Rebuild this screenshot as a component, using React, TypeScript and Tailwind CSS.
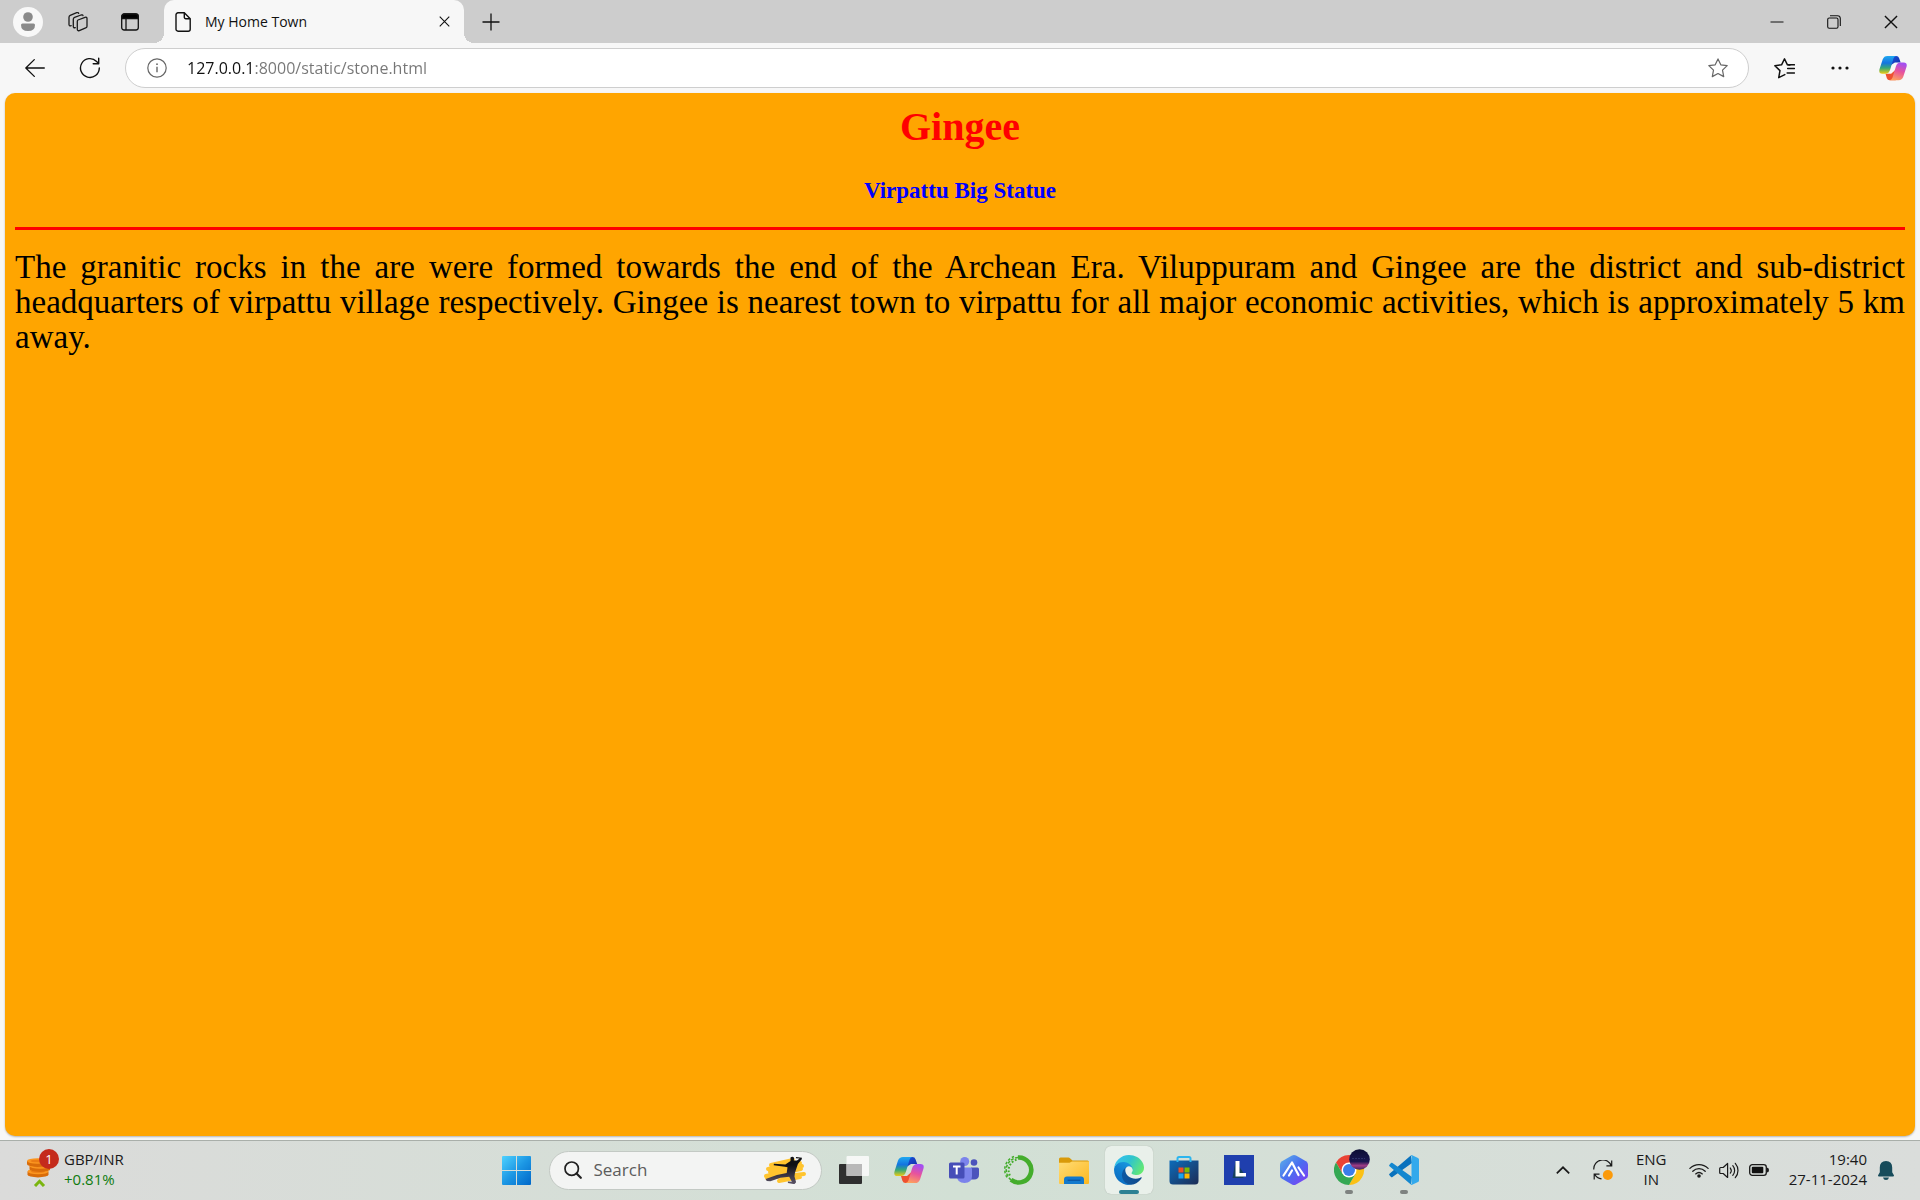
import React from "react";

type IconProps = { className?: string };

const Workspaces = ({ className }: IconProps) => (
  <svg viewBox="0 0 24 24" className={className} fill="none" stroke="#1b1b1b" strokeWidth="1.3" strokeLinejoin="round" strokeLinecap="round" aria-hidden="true">
    <path d="M12 10 19 7.300q2-.5 2 1.300v7.600q0 1.300-1.300 1.700l-6.400 2.700q-2 .6-2-1.300v-7.800q0-1.200.7-1.500Z" />
    <path d="M9.300 17.600q-2 .6-2-1.200V9.300q0-1.400 1.300-1.900L15 5q1.800-.5 2 .7" />
    <path d="M5.200 15.700q-2.200.7-2.200-1.200V7.300q0-1.400 1.200-1.900l6.500-2.700q1.700-.5 2 .7" />
  </svg>
);

const TabActions = ({ className }: IconProps) => (
  <svg viewBox="0 0 20 20" className={className} fill="none" stroke="#111" strokeWidth="1.3" aria-hidden="true">
    <rect x="1.7" y="2" width="16.600" height="16" rx="2.500" />
    <path d="M2 4.500Q2 2 4.500 2h11Q18 2 18 4.500V6.500H2Z" fill="#000" />
    <path d="M6 6.500V18" />
  </svg>
);

const PageIcon = ({ className }: IconProps) => (
  <svg viewBox="0 0 16 20" className={className} fill="none" stroke="#111" strokeWidth="1.4" strokeLinejoin="round" aria-hidden="true">
    <path d="M3 .8h6.300L15.200 6.700V17.200a2 2 0 0 1-2 2H3a2 2 0 0 1-2-2V2.800a2 2 0 0 1 2-2Z" />
    <path d="M9.300.8v4.400a1.500 1.500 0 0 0 1.500 1.500h4.400" />
  </svg>
);

const Cross = ({ className }: IconProps) => (
  <svg viewBox="0 0 12 12" className={className} fill="none" stroke="#111" strokeWidth="1.200" aria-hidden="true">
    <path d="m.8.8 10.400 10.400M11.200.8.8 11.200" />
  </svg>
);

const Plus = ({ className }: IconProps) => (
  <svg viewBox="0 0 18 18" className={className} fill="none" stroke="#111" strokeWidth="1.3" aria-hidden="true">
    <path d="M9 .5v17M.5 9h17" />
  </svg>
);

const BackArrow = ({ className }: IconProps) => (
  <svg viewBox="0 0 20 20" className={className} fill="none" stroke="#111" strokeWidth="1.300" strokeLinecap="round" strokeLinejoin="round" aria-hidden="true">
    <path d="M19.300 10H.8M9.300 1.600.8 10l8.500 8.400" />
  </svg>
);

const Reload = ({ className }: IconProps) => (
  <svg viewBox="0 0 22 22" className={className} fill="none" stroke="#111" strokeWidth="1.400" strokeLinecap="round" strokeLinejoin="round" aria-hidden="true">
    <path d="M20.300 11A9.400 9.400 0 1 1 17.600 4.400L19.600 6.500M19.700 1.200v5.500h-5.500" />
  </svg>
);

const Info = ({ className }: IconProps) => (
  <svg viewBox="0 0 20 20" className={className} fill="none" stroke="#666" strokeWidth="1.200" aria-hidden="true">
    <circle cx="10" cy="10" r="9.200" />
    <path d="M10 8.800v5.500" strokeWidth="1.400" />
    <circle cx="10" cy="6.200" r=".9" fill="#666" stroke="none" />
  </svg>
);

const Star = ({ className }: IconProps) => (
  <svg viewBox="0 0 20 20" className={className} fill="none" stroke="#666" strokeWidth="1.200" strokeLinejoin="round" aria-hidden="true">
    <path d="m10 .9 2.800 5.900 6.400.8-4.700 4.500 1.200 6.500L10 15.500l-5.700 3.100 1.200-6.500L.8 7.600l6.400-.8Z" />
  </svg>
);

const Favorites = ({ className }: IconProps) => (
  <svg viewBox="0 0 20 20" className={className} fill="none" stroke="#111" strokeWidth="1.400" strokeLinejoin="round" strokeLinecap="round" aria-hidden="true">
    <path d="m10.300 15.800-5.800 2.900 1.200-6.700L.8 7.300l6.400-.8L10 .8l2.800 5.700 2.200.3" />
    <path d="M13 10h6.500M12.500 14.300h7M13.500 6.500h6" />
  </svg>
);

const Dots = ({ className }: IconProps) => (
  <svg viewBox="0 0 18 4" className={className} fill="#111" aria-hidden="true">
    <circle cx="2" cy="2" r="1.600" />
    <circle cx="9" cy="2" r="1.600" />
    <circle cx="16" cy="2" r="1.600" />
  </svg>
);

const Copilot = ({ className, id }: IconProps & { id: string }) => (
  <svg viewBox="0 0 30 28" className={className} aria-hidden="true">
    <defs>
      <linearGradient id={id + "a"} x1="0" y1="0" x2="0" y2="1">
        <stop offset="0" stopColor="#20a9f0" />
        <stop offset=".4" stopColor="#1474e0" />
        <stop offset=".68" stopColor="#36a878" />
        <stop offset="1" stopColor="#eccb14" />
      </linearGradient>
      <linearGradient id={id + "b"} x1=".5" y1="0" x2=".2" y2="1">
        <stop offset="0" stopColor="#a44ff0" />
        <stop offset=".45" stopColor="#e8539c" />
        <stop offset="1" stopColor="#ffa65a" />
      </linearGradient>
      <linearGradient id={id + "c"} x1="0" y1="0" x2="1" y2="1">
        <stop offset="0" stopColor="#1c52dc" />
        <stop offset="1" stopColor="#1230a8" />
      </linearGradient>
    </defs>
    <path d="M12 1h6.500q2.300 0 3 2.200L23.200 8H17l-4.500 3Z" fill={`url(#${id}c)`} />
    <path d="M18 27h-6.600q-2.200 0-3-2.200L7 20h6l4.500-4Z" fill="#ee5130" />
    <path d="M9 1h9.500q-2.200.3-3 2.800L12 15.500Q10.700 20 7 20H3.500Q-.6 20 .5 15.400L4 4.600Q5.300 1 9 1Z" fill={`url(#${id}a)`} />
    <path d="M21 27h-9.600q2.400-.3 3.100-2.800L18 12.500Q19.300 8 23 8h3.500q4.100 0 3 4.600L26 23.400Q24.700 27 21 27Z" fill={`url(#${id}b)`} />
  </svg>
);

const Windows = ({ className }: IconProps) => (
  <svg viewBox="0 0 29 29" className={className} aria-hidden="true">
    <defs>
      <linearGradient id="win" x1="0" y1="0" x2="1" y2="1">
        <stop offset="0" stopColor="#4fd2ff" />
        <stop offset=".5" stopColor="#1c97e4" />
        <stop offset="1" stopColor="#0067c8" />
      </linearGradient>
    </defs>
    <path fill="url(#win)" d="M1 0h13v14H0V1q0-1 1-1Zm14 0h13q1 0 1 1v13H15ZM0 15h14v14H1q-1 0-1-1Zm15 0h14v13q0 1-1 1H15Z" />
  </svg>
);

const Magnifier = ({ className }: IconProps) => (
  <svg viewBox="0 0 18 18" className={className} fill="none" stroke="#202020" strokeLinecap="round" aria-hidden="true">
    <circle cx="7.700" cy="7.700" r="6.700" strokeWidth="1.700" />
    <path d="m12.500 12.500 4.300 4.300" strokeWidth="2.200" />
  </svg>
);

const Kick = ({ className }: IconProps) => (
  <svg viewBox="0 0 44 28" className={className} aria-hidden="true">
    <defs>
      <linearGradient id="kick" x1="0" y1="0" x2="0" y2="1">
        <stop offset=".3" stopColor="#101014" />
        <stop offset="1" stopColor="#5c5468" />
      </linearGradient>
    </defs>
    <g stroke="#ffc42e" strokeWidth="4" strokeLinecap="round" fill="none">
      <path d="M8 9 30 4M5 13 37 7M7 16 39 10M3 20 38 13M4 22 41 18M16 25 37 21" />
    </g>
    <path fill="url(#kick)" d="M27.500 1.500q2.200-1.800 3.700.6l-.4 2.300 3.200.2 2.600-2.100-3.800-.3.300-1.200 5.900.8-.4 1.800-3.700 4.500-3 8.800-.4 3.600 1.600 5.700-1.700 2-6.500-1.200 0-1.500 4 .2-2.700-5-8.800 1.100-10 3.500-3.700-.4-1-2 11.200-3.800L23.700 17l.8-5.700-2.800-.5-11-1.600.2-1.400 11.400.6 5.200-3.400Z" />
  </svg>
);

const TaskView = ({ className }: IconProps) => (
  <svg viewBox="0 0 30 28" className={className} aria-hidden="true">
    <rect x="0" y="8" width="23" height="20" rx="1" fill="#2f2f2f" />
    <rect x="7.500" y="0" width="22.500" height="20" rx="1" fill="#fafafa" fillOpacity=".88" />
    <path d="M7.500 8H23v12H7.500Z" fill="#b9b9b9" />
  </svg>
);

const Teams = ({ className }: IconProps) => (
  <svg viewBox="0 0 30 27" className={className} aria-hidden="true">
    <circle cx="25" cy="5.500" r="3.300" fill="#4b53bc" />
    <path d="M22 10.500h6.500q1.500 0 1.500 1.500v5.500q0 5-5 5h-3Z" fill="#4b53bc" />
    <circle cx="15.700" cy="4.500" r="4.500" fill="#7b83eb" />
    <path d="M9 10.500h12.500q1.500 0 1.500 1.500v7q0 7-7.500 7T8 19Z" fill="#7b83eb" />
    <rect y="5.500" width="15.500" height="16" rx="1.500" fill="#464eb8" />
    <path d="M4 9.500h7.500M7.700 9.500v8" stroke="#fff" strokeWidth="2" />
  </svg>
);

const Anaconda = ({ className }: IconProps) => (
  <svg viewBox="0 0 30 30" className={className} fill="none" stroke="#44ad2c" aria-hidden="true">
    <path d="M14 2.500A12.500 12.500 0 1 1 7 24.800" strokeWidth="4.600" />
    <path d="M14 2.500A12.500 12.500 0 0 0 7 24.800" strokeWidth="1.500" strokeDasharray="3 1.500" />
    <path d="M12.500 4.800A11 11 0 0 0 6.500 21.500" strokeWidth="2" strokeDasharray="1.800 1.700" />
    <path d="M10 1.500A14 14 0 0 0 3.500 23" strokeWidth="1.500" strokeDasharray="2.500 2" />
  </svg>
);

const Folder = ({ className }: IconProps) => (
  <svg viewBox="0 0 30 27" className={className} aria-hidden="true">
    <defs>
      <linearGradient id="fold" x1="0" y1="0" x2="1" y2="1">
        <stop offset="0" stopColor="#ffdc76" />
        <stop offset="1" stopColor="#fdb81f" />
      </linearGradient>
    </defs>
    <path d="M0 6V2Q0 .5 1.500.5h8q.8 0 1.500.7L13.500 3.500H28.500Q30 3.500 30 5v5H0Z" fill="#d99a0a" />
    <path d="M0 5.800h10.500L13 4.500h17V26q0 1-1 1H1q-1 0-1-1Z" fill="url(#fold)" />
    <path d="M5 27v-4.500q0-3 3-3h14q3 0 3 3V27Z" fill="#1379cd" />
    <path d="M9 23.200h12" stroke="#0a4b94" strokeWidth="1" strokeLinecap="round" />
  </svg>
);

const Edge = ({ className }: IconProps) => (
  <svg viewBox="0 0 256 256" className={className} aria-hidden="true">
    <defs>
      <linearGradient id="ed1" x1="0" y1=".5" x2="1" y2=".7">
        <stop offset="0" stopColor="#0c59a4" />
        <stop offset="1" stopColor="#114a8b" />
      </linearGradient>
      <linearGradient id="ed2" x1=".8" y1="0" x2=".3" y2="1">
        <stop offset="0" stopColor="#1b9de2" />
        <stop offset=".5" stopColor="#0f7fd0" />
        <stop offset="1" stopColor="#0a6cc0" />
      </linearGradient>
      <linearGradient id="ed3" x1="0" y1=".3" x2="1" y2=".7">
        <stop offset="0" stopColor="#35c1f1" />
        <stop offset=".45" stopColor="#2fc3cf" />
        <stop offset="1" stopColor="#66eb6e" />
      </linearGradient>
    </defs>
    <path fill="url(#ed1)" d="M231 190.500c-3.400 1.800-6.900 3.400-10.500 4.700a101 101 0 0 1-35.900 6.400c-47.300 0-88.500-32.500-88.500-74.300 0-11.400 6.400-21.900 16.400-27.300-42.800 1.800-53.800 46.400-53.800 72.500 0 74 68.100 81.400 82.800 81.400 7.900 0 19.800-2.300 27-4.600l1.300-.4a128 128 0 0 0 66.600-52.800 4 4 0 0 0-5.400-5.600Z" />
    <path fill="url(#ed2)" d="M105.700 241.400a79 79 0 0 1-22.700-21.300 80.700 80.700 0 0 1 29.500-120c3.200-1.500 8.500-4.100 15.600-4a32.400 32.400 0 0 1 25.700 13c4.800 6.500 6.400 12 6.400 18.700 0-.2 24.500-79.600-80-79.600C36.300 48.200.3 89.800.3 126.200c-.2 19.300 4 38.300 12.100 55.800a128 128 0 0 0 156.400 67.100 75.500 75.500 0 0 1-63-7.700Z" />
    <path fill="url(#ed3)" d="M152.300 148.900c-.8 1-3.300 2.500-3.300 5.700 0 2.600 1.700 5.100 4.700 7.200 14.400 10 41.500 8.700 41.600 8.700a59.600 59.600 0 0 0 30.300-8.300 61.400 61.400 0 0 0 30.400-52.900c.3-22.400-8-37.300-11.300-43.900C223.500 23.900 177.700 0 128 0A128 128 0 0 0 0 126.200c.5-36.500 36.800-66 80-66 3.500 0 23.500.3 42 10a72.600 72.600 0 0 1 30.900 29.300c6.100 10.600 7.200 24.100 7.200 29.500s-2.700 13.300-7.800 19.900Z" />
  </svg>
);

const Store = ({ className }: IconProps) => (
  <svg viewBox="0 0 30 30" className={className} aria-hidden="true">
    <defs>
      <linearGradient id="store" x1="0" y1="0" x2="1" y2="1">
        <stop offset="0" stopColor="#0d6cba" />
        <stop offset="1" stopColor="#1c2c55" />
      </linearGradient>
    </defs>
    <path d="M.5 5.500h29V26q0 3.500-3.500 3.500H4Q.5 29.500.5 26Z" fill="url(#store)" />
    <path d="M8.500 7V3.500q0-1.500 1.500-1.500h10q1.500 0 1.500 1.500V7" fill="none" stroke="#2cb5ee" strokeWidth="2" />
    <path d="M9.500 12.500h5v5h-5Z" fill="#f25022" />
    <path d="M15.500 12.500h5v5h-5Z" fill="#7fba00" />
    <path d="M9.500 18.500h5v5h-5Z" fill="#1ba4ee" />
    <path d="M15.500 18.500h5v5h-5Z" fill="#ffb900" />
  </svg>
);

const LApp = ({ className }: IconProps) => (
  <svg viewBox="0 0 30 30" className={className} aria-hidden="true">
    <path d="M0 0h30v30H0Z" fill="#1f3fae" />
    <path d="m11.500 6-3 17h10l3-2Z" fill="#153f5c" />
    <path d="M11.500 6h4v12h6.500v3.500H11.500Z" fill="#fff" />
  </svg>
);

const Hexagon = ({ className }: IconProps) => (
  <svg viewBox="0 0 28 30" className={className} aria-hidden="true">
    <defs>
      <linearGradient id="hex" x1="0" y1="0" x2="1" y2="1">
        <stop offset="0" stopColor="#5bb2e8" />
        <stop offset=".5" stopColor="#4a6df0" />
        <stop offset="1" stopColor="#8538f5" />
      </linearGradient>
    </defs>
    <path d="M12 .6q2-1 4 0l10 5.600q2 1.200 2 3.400v10.800q0 2.200-2 3.400l-10 5.600q-2 1-4 0L2 23.800q-2-1.200-2-3.400V9.600q0-2.200 2-3.400Z" fill="url(#hex)" />
    <path d="m3.500 20.500 8.500-13L18.500 20M9 20.500l3-5M18.500 12.500l5.500 8" fill="none" stroke="#fff" strokeWidth="2.200" strokeLinecap="round" strokeLinejoin="round" />
  </svg>
);

const Chrome = ({ className }: IconProps) => (
  <svg viewBox="0 0 36 36" className={className} aria-hidden="true">
    <defs>
      <linearGradient id="moon" x1="0" y1="0" x2="0" y2="1">
        <stop offset="0" stopColor="#0b0d33" />
        <stop offset=".6" stopColor="#191650" />
        <stop offset=".8" stopColor="#a03c86" />
        <stop offset="1" stopColor="#3a2560" />
      </linearGradient>
    </defs>
    <path d="M2 13.500A15 15 0 0 1 28 13.500H15L8.500 24.700Z" fill="#ea4335" />
    <path d="M28 13.500A15 15 0 0 1 15 36l6.500-11.200L15 13.500Z" fill="#fbc116" />
    <path d="M2 13.500A15 15 0 0 0 15 36l6.500-11.200-13-.1Z" fill="#34a853" />
    <circle cx="15" cy="21" r="7.500" fill="#fff" />
    <circle cx="15" cy="21" r="6" fill="#3b7de9" />
    <circle cx="25.500" cy="10.500" r="10.300" fill="url(#moon)" />
    <path d="M18 9.500h13" stroke="#2c3268" strokeDasharray="2 1" />
  </svg>
);

const VsCode = ({ className }: IconProps) => (
  <svg viewBox="0 0 30 30" className={className} aria-hidden="true">
    <path d="M.5 20.300q-.8-.8 0-1.600L21.800.4 23 8 3.500 22q-.8.500-1.500 0Z" fill="#0a72bd" />
    <path d="M.5 9.700q-.8.800 0 1.600l21.300 18.300L23 22 3.500 8q-.8-.5-1.500 0Z" fill="#1487cf" />
    <path d="M21.800.3q.6-.4 1.400-.1L29 3q1 .5 1 1.600v20.800q0 1.100-1 1.600l-5.800 2.800q-.8.300-1.400-.1Q23 29 22.500 27V3Q23 1 21.800.3Z" fill="#33a9ec" />
  </svg>
);

const Coins = ({ className }: IconProps) => (
  <svg viewBox="0 0 24 30" className={className} aria-hidden="true">
    {[[12, 14.500], [14, 9], [11.500, 4]].map(([x, y]) => (
      <g key={y}>
        <path d={`M${x - 10.500} ${y}v3.200a10.500 2.700 0 0 0 21 0v-3.200Z`} fill="#d96c0a" />
        <ellipse cx={x} cy={y} rx="10.500" ry="2.700" fill="#fb9620" />
        <ellipse cx={x} cy={y} rx="7" ry="1.300" fill="#ec7c14" />
      </g>
    ))}
    <path d="m9 29 4.500-4.700L18 29" fill="none" stroke="#7ab50f" strokeWidth="3" />
  </svg>
);

const Chevron = ({ className }: IconProps) => (
  <svg viewBox="0 0 14 8" className={className} fill="none" stroke="#1a1a1a" strokeWidth="1.700" aria-hidden="true">
    <path d="m.8 7.300 6.200-6 6.200 6" />
  </svg>
);

const Sync = ({ className }: IconProps) => (
  <svg viewBox="0 0 20 20" className={className} fill="none" stroke="#1a1a1a" strokeWidth="1.200" aria-hidden="true">
    <path d="M.8 9.500A9 9 0 0 1 18.300 6M18.700.5v5.300h-5.300M8.500 18.800A9 9 0 0 1 1.700 14.200M1.200 19.500v-5.300h5.300" />
    <circle cx="14.800" cy="15" r="5" fill="#fb9a0b" stroke="none" />
  </svg>
);

const Wifi = ({ className }: IconProps) => (
  <svg viewBox="0 0 20 15" className={className} fill="none" stroke="#1a1a1a" strokeWidth="1.300" strokeLinecap="round" aria-hidden="true">
    <path d="M.9 5.400a13 13 0 0 1 18.200 0M3.800 8.200a9 9 0 0 1 12.400 0M6.700 10.900a5 5 0 0 1 6.600 0" />
    <circle cx="10" cy="13" r="1.800" fill="#1a1a1a" stroke="none" />
  </svg>
);

const Speaker = ({ className }: IconProps) => (
  <svg viewBox="0 0 20 17" className={className} fill="none" stroke="#1a1a1a" strokeWidth="1.200" strokeLinecap="round" strokeLinejoin="round" aria-hidden="true">
    <path d="M1.700 5.500h2.500L8.600 1.500V15.500L4.200 11.500H1.700q-1 0-1-1v-4q0-1 1-1Z" />
    <path d="M11.300 6a4 4 0 0 1 0 5M13.800 3.600a7.500 7.500 0 0 1 0 9.800M16.300 1.300a11 11 0 0 1 0 14.400" />
  </svg>
);

const Battery = ({ className }: IconProps) => (
  <svg viewBox="0 0 20 12" className={className} aria-hidden="true">
    <rect x=".7" y=".7" width="16.600" height="10.600" rx="2.600" fill="none" stroke="#1a1a1a" strokeWidth="1.300" />
    <rect x="2.800" y="2.800" width="11.500" height="6.400" rx="1" fill="#111" />
    <path d="M17.800 3.500q2.200 0 2.200 2.500t-2.200 2.500Z" fill="#1a1a1a" />
  </svg>
);

const Bell = ({ className }: IconProps) => (
  <svg viewBox="0 0 16 19" className={className} fill="#174c5b" aria-hidden="true">
    <path d="M8 0q6.200.3 6.200 6.500v4.700l1.700 3q.4 1.200-.9 1.200H1q-1.300 0-.9-1.200l1.700-3V6.500Q1.800.3 8 0ZM5 16.500h6q-.6 2.500-3 2.500t-3-2.500Z" />
  </svg>
);

const apps = [
  { name: "Task view", icon: <TaskView className="w-[30px]" /> },
  { name: "Copilot", icon: <Copilot id="cpTask" className="w-[30px]" /> },
  { name: "Teams", icon: <Teams className="w-[30px]" /> },
  { name: "Anaconda", icon: <Anaconda className="w-[30px]" /> },
  { name: "File Explorer", icon: <Folder className="w-[30px]" /> },
  { name: "Edge", icon: <Edge className="w-[30px]" />, active: true },
  { name: "Store", icon: <Store className="w-[30px]" /> },
  { name: "Lenovo", icon: <LApp className="w-[30px]" /> },
  { name: "Assistant", icon: <Hexagon className="w-7" /> },
  { name: "Chrome", icon: <Chrome className="mb-1.5 ml-1.5 w-9" />, running: true },
  { name: "Visual Studio Code", icon: <VsCode className="w-[30px]" />, running: true },
];

function TabStrip() {
  return (
    <header className="flex h-[43px] bg-[#cdcdcd]">
      <div className="flex w-[164px] items-center pl-[13px]">
        <button aria-label="Profile" className="flex size-[30px] items-center justify-center rounded-full bg-[#f8f8f8]">
          <svg viewBox="0 0 16 20" className="w-4" fill="#8a8a8a" aria-hidden="true">
            <circle cx="8" cy="5" r="4.800" />
            <path d="M2.500 11.500h11Q15 11.500 15 13q0 6-7 6t-7-6q0-1.500 1.500-1.500Z" />
          </svg>
        </button>
        <button aria-label="Workspaces" className="ml-[23px]"><Workspaces className="size-6" /></button>
        <button aria-label="Tab actions" className="ml-[30px]"><TabActions className="size-5" /></button>
      </div>
      <div className="relative flex w-[300px] items-center rounded-t-[10px] bg-[#f7f7f7] px-[11px]">
        <span className="absolute right-full bottom-0 size-2.5 bg-[radial-gradient(circle_at_0_0,#cdcdcd_10px,#f7f7f7_10px)]" />
        <span className="absolute bottom-0 left-full size-2.5 bg-[radial-gradient(circle_at_100%_0,#cdcdcd_10px,#f7f7f7_10px)]" />
        <PageIcon className="w-4" />
        <span className="ml-3.5 flex-1 text-[14px] text-[#111]">My Home Town</span>
        <button aria-label="Close tab" className="py-1 pl-1"><Cross className="mr-[3px] size-[11px]" /></button>
      </div>
      <button aria-label="New tab" className="ml-[18px]"><Plus className="size-[18px]" /></button>
      <div className="ml-auto flex items-center">
        <button aria-label="Minimize" className="flex w-[57px] justify-center">
          <svg viewBox="0 0 14 2" className="w-3.5" aria-hidden="true"><path d="M.5 1h13" stroke="#111" /></svg>
        </button>
        <button aria-label="Restore" className="flex w-[57px] justify-center">
          <svg viewBox="0 0 14 14" className="w-3.5" fill="none" stroke="#111" strokeWidth="1.100" aria-hidden="true">
            <rect x=".7" y="3" width="10.300" height="10.300" rx="1.500" />
            <path d="M3 .7h7.500q2.800 0 2.800 2.800V11" />
          </svg>
        </button>
        <button aria-label="Close" className="flex w-[58px] justify-center"><Cross className="size-3.5" /></button>
      </div>
    </header>
  );
}

function AddressBar() {
  return (
    <nav className="flex h-[50px] items-center bg-[#f7f7f7] pr-[13px] pl-[25px]">
      <button aria-label="Back"><BackArrow className="size-5" /></button>
      <button aria-label="Refresh" className="ml-[34px]"><Reload className="size-[22px]" /></button>
      <div className="ml-6 flex h-10 flex-1 items-center rounded-full border border-[#cecece] bg-white pr-5 pl-[21px]">
        <button aria-label="Site information"><Info className="size-5" /></button>
        <input
          aria-label="Address"
          defaultValue="127.0.0.1:8000/static/stone.html"
          className="ml-5 flex-1 bg-[linear-gradient(to_right,#111_68px,#767676_68px)] bg-clip-text text-[16px] text-transparent caret-black outline-none"
        />
        <button aria-label="Add to favorites"><Star className="size-5" /></button>
      </div>
      <button aria-label="Favorites" className="ml-[25px]"><Favorites className="size-[21px]" /></button>
      <button aria-label="Settings and more" className="ml-9"><Dots className="w-[18px]" /></button>
      <button aria-label="Copilot" className="ml-[30px]"><Copilot id="cpBar" className="w-7" /></button>
    </nav>
  );
}

function Page() {
  return (
    <div className="flex flex-1 bg-[#f7f7f7] px-[5px] pb-1">
      <main className="flex-1 rounded-[10px] bg-[#ffa500] px-2.5 pt-[11px] font-['Liberation_Serif',serif] shadow-[0_1px_2px_#0004]">
        <h1 className="text-center text-[40px] leading-[46px] font-bold text-[#ff0000]">Gingee</h1>
        <h2 className="mt-7 text-center text-[23px] leading-[26px] font-bold text-[#0000ff]">Virpattu Big Statue</h2>
        <hr className="mt-[23px] border-t-[3px] border-[#ff0000]" />
        <p className="mt-5 text-justify font-[Georgia,'Liberation_Serif',serif] text-[33px] leading-[35px] text-black">
          The granitic rocks in the are were formed towards the end of the Archean Era. Viluppuram and Gingee are the
          district and sub-district headquarters of virpattu village respectively. Gingee is nearest town to virpattu for
          all major economic activities, which is approximately 5 km away.
        </p>
      </main>
    </div>
  );
}

function Taskbar() {
  return (
    <footer className="grid h-[60px] grid-cols-[1fr_auto_1fr] items-center border-t border-[#a9afaa] bg-linear-to-r from-[#dbdbda] via-[#d2e0d5] to-[#dadddb] pb-px text-[15px] text-[#1a1a1a]">
      <button className="flex items-center justify-self-start pb-[3px] pl-[26px] text-left leading-5">
        <span className="relative mt-1.5 block">
          <Coins className="w-6" />
          <span className="absolute -top-2 left-[13px] flex size-5 items-center justify-center rounded-full bg-[#c42b1c] text-[13px] text-white">1</span>
        </span>
        <span className="ml-3.5">
          <span className="block">GBP/INR</span>
          <span className="block text-[#0f7b0f]">+0.81%</span>
        </span>
      </button>
      <div className="flex items-center gap-2">
        <button aria-label="Start" className="flex size-12 items-center justify-center"><Windows className="size-[29px]" /></button>
        <div className="flex h-[39px] w-[273px] items-center rounded-full border border-[#c3c9c4] bg-[#f3f4f3] pr-3.5 pl-3.5">
          <Magnifier className="size-[18px]" />
          <input type="search" aria-label="Search" placeholder="Search" className="ml-3 w-0 flex-1 text-[17px] outline-none placeholder:text-[#5c5c5c]" />
          <Kick className="w-11" />
        </div>
        <div className="flex gap-[7px]">
          {apps.map((a) => (
            <button
              key={a.name}
              aria-label={a.name}
              className={"relative flex size-12 items-center justify-center rounded-md " + (a.active ? "bg-[#e9f0ea] shadow-[0_0_1px_#0004]" : "")}
            >
              {a.icon}
              {a.active && <span className="absolute bottom-0 h-1 w-5 rounded-full bg-[#2c8093]" />}
              {a.running && <span className="absolute bottom-0 h-1 w-2 rounded-full bg-[#7e8280]" />}
            </button>
          ))}
        </div>
      </div>
      <div className="flex items-center justify-self-end pr-[26px] leading-5">
        <button aria-label="Show hidden icons"><Chevron className="w-3.5" /></button>
        <button aria-label="Updates" className="ml-[23px]"><Sync className="size-5" /></button>
        <button aria-label="Input language" className="ml-[23px] w-[31px] pb-[3px] text-center">ENG IN</button>
        <button aria-label="Network, volume and battery" className="ml-[22px] flex items-center gap-2.5">
          <Wifi className="w-5" />
          <Speaker className="w-5" />
          <Battery className="w-5" />
        </button>
        <button className="ml-5 pb-[3px] text-right">
          <time className="block">19:40</time>
          <time className="block">27-11-2024</time>
        </button>
        <button aria-label="Notifications" className="ml-[11px]"><Bell className="w-4" /></button>
      </div>
    </footer>
  );
}

export default function App() {
  return (
    <div className="flex min-h-screen flex-col font-['Segoe_UI','Open_Sans',sans-serif]">
      <TabStrip />
      <AddressBar />
      <Page />
      <Taskbar />
    </div>
  );
}
